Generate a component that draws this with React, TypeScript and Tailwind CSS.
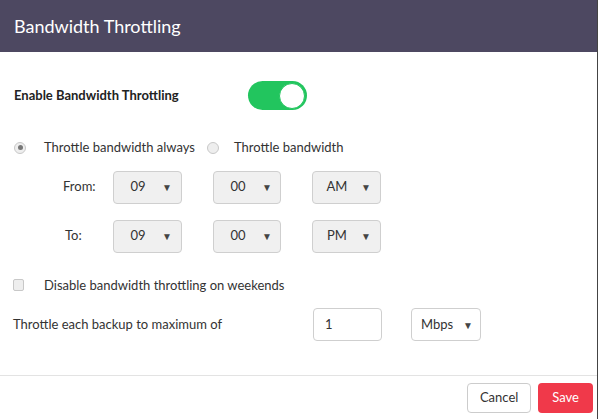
const Caret = () => <span className="text-[10px] text-[#444] leading-none">▼</span>;

const Select = ({ value, w = "w-[69px]" }: { value: string; w?: string }) => (
  <div className={`${w} h-[33px] flex items-center bg-[#f0f0f0] border border-[#cfcfcf] rounded-[4px] text-[13px] text-[#333]`}>
    <span className="w-[48px] text-center">{value}</span>
    <Caret />
  </div>
);

const TimeRow = ({ label, pad, h, m, ap }: { label: string; pad: string; h: string; m: string; ap: string }) => (
  <div className="flex items-center">
    <div className={`w-[113px] ${pad} text-[13px] text-[#333]`}>{label}</div>
    <Select value={h} />
    <div className="w-[31px]" />
    <Select value={m} w="w-[68px]" />
    <div className="w-[31px]" />
    <Select value={ap} />
  </div>
);

export default function App() {
  return (
    <div className="w-[598px] h-[419px] bg-white border-r border-[#444] flex flex-col font-['Lato',sans-serif] text-[#333] overflow-hidden">
      {/* Header */}
      <div className="h-[52px] shrink-0 bg-[#4d4861] flex items-center px-[14px]">
        <h1 className="text-[18px] text-white">Bandwidth Throttling</h1>
      </div>

      <div className="flex-1 pl-[13px]">
        <div className="flex items-center h-[29px] mt-[29px]">
          <span className="w-[235px] pl-[1px] text-[13px] font-bold text-[#222]">Enable Bandwidth Throttling</span>
          <div className="w-[59px] h-[29px] rounded-full bg-[#22c55e] flex items-center justify-end pr-[2px]">
            <div className="w-[26px] h-[26px] rounded-full bg-white border border-[#22c55e]" />
          </div>
        </div>

        <div className="flex items-center mt-[28px] text-[13px]">
          <div className="w-[12px] h-[12px] ml-[1px] rounded-full border border-[#c8c8c8] bg-[#eee] flex items-center justify-center">
            <div className="w-[5px] h-[5px] rounded-full bg-[#777]" />
          </div>
          <span className="ml-[18px]">Throttle bandwidth always</span>
          <div className="w-[12px] h-[12px] ml-[12px] rounded-full border border-[#c8c8c8] bg-[#eee]" />
          <span className="ml-[15px]">Throttle bandwidth</span>
        </div>

        <div className="mt-[13px] -ml-[13px] flex flex-col gap-[16px]">
          <TimeRow label="From:" pad="pl-[63px]" h="09" m="00" ap="AM" />
          <TimeRow label="To:" pad="pl-[65px]" h="09" m="00" ap="PM" />
        </div>

        <div className="flex items-center mt-[23px] text-[13px]">
          <div className="w-[11px] h-[12px] rounded-[2px] border border-[#c8c8c8] bg-[#eee]" />
          <span className="ml-[20px]">Disable bandwidth throttling on weekends</span>
        </div>

        <div className="flex items-center mt-[13px] text-[13px]">
          <span className="w-[300px]">Throttle each backup to maximum of</span>
          <div className="w-[69px] h-[33px] flex items-center pl-[11px] border border-[#cfcfcf] rounded-[4px] bg-white">1</div>
          <div className="w-[29px]" />
          <div className="w-[70px] h-[33px] flex items-center justify-between pl-[9px] pr-[7px] border border-[#cfcfcf] rounded-[4px] bg-white">
            <span>Mbps</span>
            <Caret />
          </div>
        </div>
      </div>

      {/* Footer */}
      <div className="h-[44px] shrink-0 border-t border-[#e3e3e3] flex items-center justify-end gap-[7px] pr-[4px]">
        <button className="h-[30px] px-[12px] rounded-[4px] border border-[#ccc] bg-white text-[13px] text-[#333]">Cancel</button>
        <button className="h-[30px] px-[14px] rounded-[4px] bg-[#f0394a] text-[13px] text-white">Save</button>
      </div>
    </div>
  );
}
